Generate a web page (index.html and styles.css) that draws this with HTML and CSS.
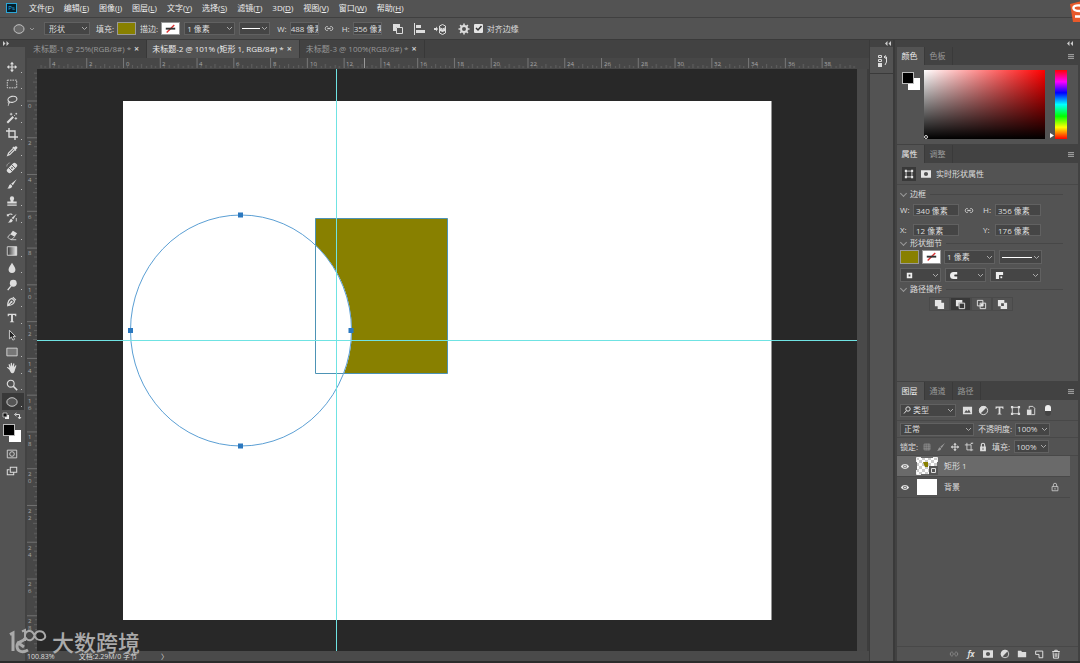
FILE: index.html
```html
<!DOCTYPE html>
<html lang="zh-CN">
<head>
<meta charset="utf-8">
<title>未标题-2</title>
<link rel="stylesheet" href="styles.css">
</head>
<body>
<svg class="defs" aria-hidden="true">
  <defs>
    <symbol id="shape-add" viewBox="0 0 12 12"><path fill="currentColor" d="M1 1h7v3h3v7H4V8H1z"/></symbol>
    <symbol id="shape-sub" viewBox="0 0 12 12"><path fill="currentColor" d="M1 1h7v3H4v4H1z"/><path fill="none" stroke="currentColor" d="M4.500 4.500h6v6h-6z"/></symbol>
    <symbol id="shape-int" viewBox="0 0 12 12"><path fill="none" stroke="currentColor" d="M1.500 1.500h6v6h-6zM4.500 4.500h6v6h-6z"/><path fill="currentColor" d="M5 5h3v3H5z"/></symbol>
    <symbol id="shape-xor" viewBox="0 0 12 12"><path fill="currentColor" fill-rule="evenodd" d="M1 1h7v3h3v7H4V8H1zM4.500 4.500v3h3v-3z"/></symbol>
    <symbol id="link" viewBox="0 0 12 8"><path fill="none" stroke="currentColor" stroke-width="1.200" d="M5 2.500C4 1 1.500 1.500 1.500 4S4 7 5 5.500M7 2.500C8 1 10.500 1.500 10.500 4S8 7 7 5.500M4 4h4"/></symbol>
    <symbol id="eye" viewBox="0 0 12 8"><path fill="currentColor" fill-rule="evenodd" d="M1 4C3.500 0 8.500 0 11 4 8.500 8 3.500 8 1 4zM6 1.800A2.200 2.200 0 1 0 6 6.200 2.200 2.200 0 1 0 6 1.800z"/><circle cx="6" cy="4" r="1.200" fill="currentColor"/></symbol>
    <symbol id="bounds" viewBox="0 0 12 12"><path fill="none" stroke="currentColor" d="M2.500 2.500h7v7h-7z"/><path fill="currentColor" d="M1 1h2.500v2.500H1zM8.500 1H11v2.500H8.500zM1 8.500h2.500V11H1zM8.500 8.500H11V11H8.500z"/></symbol>
    <symbol id="move" viewBox="0 0 14 14"><path fill="currentColor" d="M7 1l2.300 2.700H7.700v2.600h2.600V4.700L13 7l-2.700 2.300V7.700H7.700v2.600h1.600L7 13l-2.300-2.700h1.600V7.700H3.700v1.600L1 7l2.700-2.300v1.600h2.600V3.700H4.700z"/></symbol>
    <symbol id="brush" viewBox="0 0 14 14"><path fill="currentColor" d="M12.500 1.500L8 8.500 6 6.800zM5.300 7.400l2 1.800C7 12 4 12.500 1.500 12.200 3.500 11.500 3 8 5.300 7.400z"/></symbol>
    <symbol id="half" viewBox="0 0 12 12"><circle cx="6" cy="6" r="4.500" fill="none" stroke="currentColor"/><path fill="currentColor" d="M2.500 9.500A4.900 4.900 0 0 1 9.500 2.500z"/></symbol>
    <symbol id="mask" viewBox="0 0 12 12"><path fill="currentColor" fill-rule="evenodd" d="M0 1.500h12v9H0zM6 3.500A2.500 2.500 0 1 0 6 8.500 2.500 2.500 0 1 0 6 3.500z"/></symbol>
    <symbol id="lock" viewBox="0 0 12 12"><path fill="none" stroke="currentColor" stroke-width="1.300" d="M4 6V3.500a2 2 0 0 1 4 0V6"/><path fill="currentColor" fill-rule="evenodd" d="M2.500 5.500h7V11h-7zM5.500 7v2.500h1V7z"/></symbol>
    <symbol id="type" viewBox="0 0 14 14"><path fill="currentColor" d="M2 2h10v3h-1c-.2-1-.6-1.400-2.900-1.400v6.900c0 .5.400.7 1.400.8v.7h-5v-.7c1-.1 1.400-.3 1.400-.8V3.600C3.600 3.600 3.200 4 3 5H2z"/></symbol>
  </defs>
</svg>

<nav class="menubar">
  <span class="ps">Ps</span>
  <button>文件(<u>F</u>)</button><button>编辑(<u>E</u>)</button><button>图像(<u>I</u>)</button><button>图层(<u>L</u>)</button><button>文字(<u>Y</u>)</button><button>选择(<u>S</u>)</button><button>滤镜(<u>T</u>)</button><button>3D(<u>D</u>)</button><button>视图(<u>V</u>)</button><button>窗口(<u>W</u>)</button><button>帮助(<u>H</u>)</button>
</nav>

<header class="options">
  <button class="preset" aria-label="椭圆工具"><svg width="24" height="12" viewBox="0 0 24 12"><ellipse cx="6" cy="6" rx="5" ry="4.300" fill="#686868" stroke="#c4c4c4"/><path d="M17 5l2 2 2-2" fill="none" stroke="#999"/></svg></button>
  <select class="field mode" aria-label="工具模式"><option>形状</option></select>
  <span class="lab">填充:</span><button class="swatch olive" aria-label="填充"></button>
  <span class="lab">描边:</span><button class="swatch none" aria-label="描边"><svg viewBox="0 0 18 12"><path d="M5 10L13 2" stroke="#d33" stroke-width="1.500"/><path d="M4 6h10" stroke="#333" stroke-width="2"/></svg></button>
  <select class="field stroke-w" aria-label="描边宽度"><option>1 像素</option></select>
  <button class="field line-style" aria-label="描边类型"><i></i></button>
  <label class="lab wlab" for="ow">W:</label><input class="field size" id="ow" value="488 像素">
  <svg class="lnk" width="10" height="7"><use href="#link"/></svg>
  <label class="lab" for="oh">H:</label><input class="field size" id="oh" value="356 像素">
  <span class="optset">
    <button aria-label="路径操作"><svg><use href="#shape-sub"/></svg></button>
    <button aria-label="路径对齐方式"><svg viewBox="0 0 12 12"><path fill="currentColor" d="M1 0h1v12H1zM3 2h5v3H3zM3 7h9v3H3z"/></svg></button>
    <button aria-label="路径排列方式"><svg viewBox="0 0 12 12"><path fill="currentColor" d="M0 5h2V3.500L4 6 2 8.500V7H0z"/><path fill="none" stroke="currentColor" d="M5.500 3l3-1.500 3 1.500v7l-3 1.500-3-1.500zM5 4.500l3.500 1.500L12 4.500"/><path fill="currentColor" d="M6 5.500l2.500 1 2.500-1V8L8.500 9 6 8z"/></svg></button>
  </span>
  <button class="gear" aria-label="设置"><svg width="12" height="12" viewBox="0 0 12 12"><circle cx="6" cy="6" r="3" fill="none" stroke="#ddd" stroke-width="2"/><path stroke="#ddd" stroke-width="1.600" d="M6 .5v2M6 9.500v2M.5 6h2M9.500 6h2M2.100 2.100l1.400 1.400M8.500 8.500l1.400 1.400M2.100 9.900l1.400-1.400M8.500 3.500l1.400-1.400"/></svg></button>
  <label class="check"><input type="checkbox" checked>对齐边缘</label>
</header>

<main>
  <aside class="tools">
    <div class="grip"><svg width="8" height="5" viewBox="0 0 8 5"><path fill="#ccc" d="M1 0l2.500 2.500L1 5zM4.500 0L7 2.500 4.500 5z"/></svg></div>
    <div class="tool-list">
      <button aria-label="移动"><svg><use href="#move"/></svg></button>
      <button aria-label="选框"><svg viewBox="0 0 14 14"><path d="M1.500 2.500h11v9h-11z" fill="none" stroke="currentColor" stroke-dasharray="2 1"/></svg></button>
      <button aria-label="套索"><svg viewBox="0 0 14 14"><ellipse cx="7.500" cy="5" rx="5.300" ry="3.500" fill="none" stroke="currentColor" stroke-width="1.300" transform="rotate(-12 7.500 5)"/><path d="M3.500 7c-2 1-1 3 .5 2.300S4 8 3.300 9.500s0 2.500-1 3.200" fill="none" stroke="currentColor"/></svg></button>
      <button aria-label="魔棒"><svg viewBox="0 0 14 14"><path d="M1.500 12.500l7-7" stroke="currentColor" stroke-width="2.400"/><path d="M9.500 4.500l1-1M6 1v3M4.500 2.500h3M12 1v2M11 2h2M11.500 6v3M10 7.500h3" stroke="currentColor"/></svg></button>
      <button aria-label="裁剪"><svg viewBox="0 0 14 14"><path d="M3.500 0v10.500H14M0 3.500h10.500V14" fill="none" stroke="currentColor" stroke-width="1.600"/></svg></button>
      <button aria-label="吸管"><svg viewBox="0 0 14 14"><path fill="currentColor" d="M7.500 3l1.200-1.200.8.700C11 .5 13.800 1.300 13.200 3.500c-.2.700-1 1-1.700 1.500l.7.700L11 7z"/><path d="M8.500 4L3 9.500l-1 2.700 2.500-1L10 5.500" fill="none" stroke="currentColor" stroke-width="1.400"/></svg></button>
      <button aria-label="修复画笔"><svg viewBox="0 0 14 14"><g transform="rotate(-45 7 7)"><rect x="0" y="4" width="14" height="6" rx="2.500" fill="currentColor"/><path d="M4.500 4v6M9.500 4v6" stroke="#535353"/><circle cx="7" cy="7" r="1" fill="#535353"/></g><path d="M1 5a4 4 0 0 1 4-4" fill="none" stroke="currentColor" stroke-dasharray="1 1"/></svg></button>
      <button aria-label="画笔"><svg><use href="#brush"/></svg></button>
      <button aria-label="仿制图章"><svg viewBox="0 0 14 14"><path fill="currentColor" d="M4.500 4a2.500 2.500 0 1 1 5 0c0 1-1 2-.9 3.500H12.500V10h-11V7.500h3.900C5.500 6 4.500 5 4.500 4zM1.500 11h11v1.500h-11z"/></svg></button>
      <button aria-label="历史记录画笔"><svg viewBox="0 0 14 14"><path fill="currentColor" d="M12.500 2L8.500 8.500l-2-1.500zM6 8l2 1.500c-1 3-3.500 3-6 2.800C4.500 11.500 4 9 6 8zM1 2l1 1c2-2 5-1.500 6 0l-1 .5C6 2.500 4 2.500 3 4l1 1H1z"/><path d="M12 7v4" stroke="currentColor"/></svg></button>
      <button aria-label="橡皮擦"><svg viewBox="0 0 14 14"><path fill="currentColor" d="M8 2l5 3-3 4-5-3z"/><path d="M5 6L2 9.500 4.500 12H7l3-3M6 12.500h6" fill="none" stroke="currentColor"/></svg></button>
      <button aria-label="渐变"><svg viewBox="0 0 14 14"><defs><linearGradient id="tg"><stop stop-color="#333"/><stop offset="1" stop-color="#eee"/></linearGradient></defs><path d="M1.500 2h11v10h-11z" fill="url(#tg)" stroke="currentColor"/></svg></button>
      <button aria-label="模糊"><svg viewBox="0 0 14 14"><path fill="currentColor" d="M7 1c1 2.500 4 5 4 7.700a4 4 0 0 1-8 0C3 6 6 3.500 7 1z"/></svg></button>
      <button aria-label="减淡"><svg viewBox="0 0 14 14"><circle cx="8.500" cy="5" r="4" fill="currentColor"/><path d="M6 8l-4 5" stroke="currentColor" stroke-width="1.600"/></svg></button>
      <button aria-label="钢笔"><svg viewBox="0 0 14 14"><path d="M2 12.500C2 8 3 5 7 4l3 3c-.5 4-3.500 5-8 5.500zM2 12.500L6 8.500M8 2.500L11.500 6" fill="none" stroke="currentColor" stroke-width="1.400"/><circle cx="6.500" cy="8" r="1.200" fill="currentColor"/></svg></button>
      <button aria-label="文字"><svg><use href="#type"/></svg></button>
      <button aria-label="路径选择"><svg viewBox="0 0 14 14"><path d="M4 1.500v10l2.300-2.200L8 13l2-1-1.700-3.300H11z" fill="#222" stroke="currentColor" stroke-width="1"/></svg></button>
      <button aria-label="矩形"><svg viewBox="0 0 14 14"><path d="M1 2.500h12v9H1z" fill="#777" stroke="currentColor"/></svg></button>
      <button aria-label="抓手"><svg viewBox="0 0 14 14"><path fill="currentColor" d="M4 9L1 6.500c0-1 1-1 3 .5L3 3c.3-.8 1-.8 1.400 0l1 2.500L5.500 1.500c.3-.8 1.200-.8 1.400 0l.3 3.800L8.500 2c.5-.7 1.300-.5 1.300.3L9.200 6 11 4c.7-.4 1.300.1 1 .8L10.500 9c-.5 2-1 4-3 4S5 11 4 9z"/></svg></button>
      <button aria-label="缩放"><svg viewBox="0 0 14 14"><circle cx="5.500" cy="5.500" r="4" fill="none" stroke="currentColor" stroke-width="1.300"/><path d="M8.500 8.500l4.500 4.500" stroke="currentColor" stroke-width="1.800"/></svg></button>
      <button class="on" aria-label="椭圆"><svg viewBox="0 0 14 14"><ellipse cx="7" cy="7" rx="6" ry="5" fill="#555" stroke="currentColor"/></svg></button>
    </div>
    <svg class="mini" width="20" height="8" viewBox="0 0 20 8"><path fill="#eee" d="M3 3h4v4H3z"/><path fill="#111" stroke="#ccc" stroke-width=".8" d="M1 1h4v4H1z"/><path d="M13.500 2.500h4v4M14.500 1l-2 1.500 2 1.500M16 5l1.500 2L19 5" fill="none" stroke="#ddd"/></svg>
    <div class="colors"><b></b><i></i></div>
    <div class="tool-end">
      <button aria-label="快速蒙版"><svg viewBox="0 0 14 14"><path d="M1.500 2.500h11v9h-11z" fill="none" stroke="currentColor"/><circle cx="7" cy="7" r="2.700" fill="none" stroke="currentColor"/></svg></button>
      <button aria-label="屏幕模式"><svg viewBox="0 0 14 14"><path d="M5 2.500h7.500v6H5zM4 5.500H1.500v6H9V9" fill="none" stroke="currentColor" stroke-width="1.200"/></svg></button>
    </div>
  </aside>

  <section class="doc">
    <div class="tabs">
      <button>未标题-1 @ 25%(RGB/8#) *<b>×</b></button><button class="active">未标题-2 @ 101% (矩形 1, RGB/8#) *<b>×</b></button><button>未标题-3 @ 100%(RGB/8#) *<b>×</b></button>
    </div>
    <div class="work">
      <svg class="hruler"><defs>
        <pattern id="hp" width="36.770" height="10" x="96" patternUnits="userSpaceOnUse"><path d="M.5 0v10" stroke="#777"/><path d="M4.500 8v2M9.500 7v3M14.500 8v2M18.500 6v4M23.500 8v2M28.500 7v3M32.500 8v2" stroke="#606060"/></pattern></defs>
        <rect x="10" width="820" height="10" fill="url(#hp)"/>
        <g><text x="25" y="8">4</text><text x="62" y="8">2</text><text x="99" y="8">0</text><text x="135" y="8">2</text><text x="172" y="8">4</text><text x="209" y="8">6</text><text x="246" y="8">8</text><text x="283" y="8">10</text><text x="319" y="8">12</text><text x="356" y="8">14</text><text x="393" y="8">16</text><text x="430" y="8">18</text><text x="466" y="8">20</text><text x="503" y="8">22</text><text x="540" y="8">24</text><text x="577" y="8">26</text><text x="614" y="8">28</text><text x="650" y="8">30</text><text x="687" y="8">32</text><text x="724" y="8">34</text><text x="761" y="8">36</text><text x="797" y="8">38</text></g>
        <path d="M337.500 0v10" stroke="#999"/>
      </svg>
      <svg class="vruler"><defs>
        <pattern id="vp" width="10" height="36.770" y="31.500" patternUnits="userSpaceOnUse"><path d="M0 .5h10" stroke="#707070"/><path d="M8 4.500h2M7 9.500h3M8 14.500h2M6 18.500h4M8 23.500h2M7 28.500h3M8 32.500h2" stroke="#606060"/></pattern></defs>
        <rect width="10" height="582" fill="url(#vp)"/>
        <g><text x="1" y="39">0</text><text x="1" y="76">2</text><text x="1" y="113">4</text><text x="1" y="150">6</text><text x="1" y="186">8</text><text x="1" y="223">1</text><text x="1" y="230">0</text><text x="1" y="260">1</text><text x="1" y="267">2</text><text x="1" y="297">1</text><text x="1" y="304">4</text><text x="1" y="334">1</text><text x="1" y="341">6</text><text x="1" y="370">1</text><text x="1" y="377">8</text><text x="1" y="407">2</text><text x="1" y="414">0</text><text x="1" y="444">2</text><text x="1" y="451">2</text><text x="1" y="481">2</text><text x="1" y="488">4</text><text x="1" y="517">2</text><text x="1" y="524">6</text><text x="1" y="554">2</text><text x="1" y="561">8</text></g>
      </svg>
      <svg class="canvas"><g transform="translate(-37 -69)">
        <path fill="#fff" d="M123 101h648.500v519H123z"/>
        <path fill="#888000" d="M315.500 218.500h132v155H344A110.500 115.500 0 0 0 315.500 245z"/>
        <path fill="none" stroke="#4d93b5" d="M315.500 218.500h132v155h-132z"/>
        <ellipse cx="241" cy="330.500" rx="110.500" ry="115.500" fill="none" stroke="#5b9fd4"/>
        <path fill="none" stroke="#6fe3e3" d="M336.500 69v2000"/><path fill="none" stroke="#6fe3e3" d="M37 340.500h3000"/>
        <path fill="#2b78bf" d="M238 212.500h5v5h-5zM238 443.500h5v5h-5zM128 328h5v5h-5zM348.500 328h5v5h-5z"/>
      </g></svg>
      <div class="vscroll"></div>
    </div>
    <footer class="status"><span>100.83%</span><span>文档:2.29M/0 字节</span><span>〉</span></footer>
  </section>

  <aside class="dock">
    <div class="grip"><svg width="8" height="5" viewBox="0 0 8 5"><path fill="#ccc" d="M3.500 0L1 2.500 3.500 5zM7 0L4.500 2.500 7 5z"/></svg></div>
    <button class="history" aria-label="历史记录"><svg width="12" height="14" viewBox="0 0 12 14"><path fill="#ddd" d="M1 9h4v4H1z"/><path d="M1.500 1.500h3v2h-3zM1.500 5.500h3v2h-3zM7 3h2.500v5L8 11M9 1.500L7 3l2 1.500" fill="none" stroke="#ddd"/></svg></button>
    <div class="dock-rest"></div>
  </aside>

  <aside class="panels">
    <div class="grip"><svg width="8" height="5" viewBox="0 0 8 5"><path fill="#ccc" d="M3.500 0L1 2.500 3.500 5zM7 0L4.500 2.500 7 5z"/></svg></div>
    <section class="panel color">
      <div class="ptabs"><button class="active">颜色</button><button>色板</button><i class="burger"></i></div>
      <div class="picker">
        <div class="colors"><b></b><i></i></div>
        <div class="field-sv"><i></i></div>
        <svg class="ptr" width="6" height="7" viewBox="0 0 6 7"><path fill="#fff" d="M1 1l4 2.500L1 6z"/></svg>
        <div class="hue"></div>
      </div>
    </section>

    <section class="panel props">
      <div class="ptabs"><button class="active">属性</button><button>调整</button><i class="burger"></i></div>
      <div class="phead"><span class="ic on"><svg><use href="#bounds"/></svg></span><span class="ic"><svg><use href="#mask"/></svg></span>实时形状属性</div>
      <div class="pbody">
        <h3>边框</h3>
        <div class="xy"><label for="pw">W:</label><input class="field" id="pw" value="340 像素"><svg class="lnk" width="10" height="7"><use href="#link"/></svg><label for="ph">H:</label><input class="field" id="ph" value="356 像素"></div>
        <div class="xy second"><label for="px">X:</label><input class="field" id="px" value="12 像素"><span></span><label for="py">Y:</label><input class="field" id="py" value="176 像素"></div>
        <h3>形状细节</h3>
        <div class="row"><button class="swatch olive" aria-label="填充"></button><button class="swatch none" aria-label="描边"><svg viewBox="0 0 18 12"><path d="M5 10L13 2" stroke="#d33" stroke-width="1.500"/><path d="M4 6h10" stroke="#333" stroke-width="2"/></svg></button><select class="field stroke-w" aria-label="描边宽度"><option>1 像素</option></select><button class="field line-style" aria-label="描边类型"><i></i></button></div>
        <div class="row drops">
          <button class="field" aria-label="对齐"><svg viewBox="0 0 10 10"><path d="M3 3h4v4H3z" fill="none" stroke="#eee" stroke-width="2"/></svg></button>
          <button class="field" aria-label="端点"><svg viewBox="0 0 10 10"><path fill="#eee" d="M8 1v3H5v2h3v3H4a4 4 0 0 1 0-8z"/><path d="M5 5h4" stroke="#333"/></svg></button>
          <button class="field" aria-label="角点"><svg viewBox="0 0 10 10"><path fill="#eee" d="M1 1h8v3.500H4.500V9H1z"/><path fill="#eee" d="M6 6h2v2H6z"/></svg></button>
        </div>
        <h3>路径操作</h3>
        <div class="pathops"><button aria-label="合并"><svg><use href="#shape-add"/></svg></button><button class="on" aria-label="减去"><svg><use href="#shape-sub"/></svg></button><button aria-label="相交"><svg><use href="#shape-int"/></svg></button><button aria-label="排除"><svg><use href="#shape-xor"/></svg></button></div>
      </div>
    </section>

    <section class="panel layers">
      <div class="ptabs"><button class="active">图层</button><button>通道</button><button>路径</button><i class="burger"></i></div>
      <div class="lrow filter">
        <div class="kind-wrap"><svg width="8" height="8" viewBox="0 0 8 8"><circle cx="5" cy="3" r="2.200" fill="none" stroke="#ddd"/><path d="M3.500 4.500L1 7.500" stroke="#ddd"/></svg><select class="field kind" aria-label="类型"><option>类型</option></select></div>
        <svg viewBox="0 0 12 12"><path fill="currentColor" fill-rule="evenodd" d="M1 2h10v8H1zM2.500 8.500h7L7.500 5 6 7 4.500 5.500z"/></svg>
        <svg><use href="#half"/></svg><svg><use href="#type"/></svg><svg><use href="#bounds"/></svg>
        <svg viewBox="0 0 12 12"><path d="M3.500 4V1.500h4l2 2v7H6" fill="none" stroke="currentColor"/><path fill="currentColor" d="M1 5h5v6H1z"/></svg>
        <i class="toggle"></i>
      </div>
      <div class="lrow"><select class="field blend" aria-label="混合模式"><option>正常</option></select><label for="op">不透明度:</label><select class="field pct" id="op"><option>100%</option></select></div>
      <div class="lrow locks"><span>锁定:</span>
        <svg viewBox="0 0 12 12"><path d="M2.500 2.500h7v7h-7zM5 2v8M7.500 2v8M2 5h8M2 7.500h8" fill="none" stroke="#999" stroke-width=".8"/></svg><svg class="dim"><use href="#brush"/></svg><svg><use href="#move"/></svg><svg viewBox="0 0 12 12"><path d="M1 3.500h7.500V11M3.500 1v8.500H11M8 3l2-2M8 1.500h3" fill="none" stroke="currentColor"/></svg><svg><use href="#lock"/></svg>
        <label for="fl">填充:</label><select class="field pct" id="fl"><option>100%</option></select></div>
      <div class="list">
        <div class="layer sel"><svg class="eye"><use href="#eye"/></svg>
          <svg class="thumb" viewBox="0 0 22 18"><defs><pattern id="ck" width="6" height="6" patternUnits="userSpaceOnUse"><path fill="#fff" d="M0 0h6v6H0z"/><path fill="#ccc" d="M0 0h3v3H0zM3 3h3v3H3z"/></pattern></defs><path fill="url(#ck)" d="M1 1h20v16H1z"/><path fill="#888000" d="M7 5h5v5H9z"/><path fill="#555" d="M13 9h9v9h-9z"/><path d="M15.500 11.500h4v4h-4z" fill="none" stroke="#ddd"/><path d="M.5 5V.5H5M17 .5h4.500V5M.5 13v4.500H5" fill="none" stroke="#eee"/></svg><span>矩形 1</span></div>
        <div class="layer"><svg class="eye"><use href="#eye"/></svg><i class="thumb bg"></i><span>背景</span>
          <svg class="lk" viewBox="0 0 12 12"><path d="M4 5.500V3.500a2 2 0 0 1 4 0v2M2.500 5.500h7v5h-7zM6 7v2" fill="none" stroke="currentColor"/></svg></div>
      </div>
      <div class="lfoot">
        <svg class="dim" viewBox="0 0 12 8"><use href="#link"/></svg>
        <button class="fx">fx</button><svg><use href="#mask"/></svg><svg><use href="#half"/></svg>
        <svg viewBox="0 0 12 12"><path fill="currentColor" d="M1 2h4l1 1.500h5V10H1z"/></svg>
        <svg viewBox="0 0 12 12"><path d="M2 2.500h8.500v8H6V6.500H2z" fill="none" stroke="currentColor" stroke-width="1.200"/></svg>
        <svg viewBox="0 0 12 12"><path d="M1.500 3h9M4.500 2.500v-1h3v1M2.500 4l.5 7h6l.5-7M5 5v4.500M7 5v4.500" fill="none" stroke="currentColor" stroke-width="1.200"/></svg>
      </div>
    </section>
  </aside>
</main>

<svg class="ime" width="12" height="24" viewBox="0 0 12 24"><path fill="#e8592a" d="M2 4l12-3v21H5z"/><path d="M12 5.500C7 5 5 6.500 5.500 8.500S9 11 12 11M7 16.500h5" fill="none" stroke="#fff" stroke-width="2.400"/></svg>
<div class="brand"><svg width="40" height="28" viewBox="0 0 40 28"><path d="M2 7.500L5 6v18M17 11c-1 4-8 3-8 8 0 6 6 7 11 4M9 15l7 5" fill="none" stroke="currentColor" stroke-width="3"/><path d="M14 4.500l3-1.500v11M17 10c3 5 8 4 9.500-1.500S35 3 37 8s-7.500 8-10.500.5S17 4 17 9" fill="none" stroke="currentColor" stroke-width="2"/></svg><span>大数跨境</span></div>
</body>
</html>
```
FILE: styles.css
```css
* { box-sizing: border-box; }
body {
  margin: 0; height: 100vh; display: flex; flex-direction: column; overflow: hidden;
  background: #535353; color: #dedede;
  font: 8px/10px "Open Sans", "Noto Sans CJK SC", sans-serif;
}
button, input, select { font: inherit; color: inherit; margin: 0; padding: 0; border: 0; background: none; border-radius: 0; appearance: none; min-width: 0; }
button { display: block; }
svg { display: block; flex: none; }
.defs { position: absolute; width: 0; height: 0; }

.menubar { display: flex; align-items: center; height: 18px; gap: 10px; padding: 0 6px 2px; border-bottom: 1px solid #404040; }
.menubar button { white-space: nowrap; color: #eee; }
.ps { width: 11px; height: 10px; margin-right: 2px; border: 1px solid #2ba6d8; background: #04202d; color: #2fb4ea; font-size: 6px; line-height: 8px; text-align: center; }

.options { display: flex; align-items: center; height: 22px; padding-left: 13px; border-bottom: 1px solid #3a3a3a; }
.field { height: 13px; background-color: #454545; border: 1px solid #616161; padding-left: 4px; text-align: left; }
select.field, .line-style, .drops .field {
  background-image: url("data:image/svg+xml,%3Csvg xmlns='http://www.w3.org/2000/svg' width='7' height='5'%3E%3Cpath d='M1 1l2.500 2.500L6 1' fill='none' stroke='%23aaa'/%3E%3C/svg%3E");
  background-repeat: no-repeat; background-position: right 1px center;
}
.preset { width: 31px; }
.mode { width: 46px; margin-right: 6px; }
.lab { margin-right: 3px; }
.swatch { width: 19px; height: 13px; margin-right: 4px; border: 1px solid #999; }
.olive { background: #888000; }
.none { background: #fff; }
.stroke-w { width: 51px; padding-left: 2px; margin-right: 4px; }
.line-style { width: 31px; padding: 0 9px 0 2px; }
.line-style i { display: block; height: 1px; background: #fff; }
.wlab { margin-left: 7px; }
.size { width: 29px; padding-left: 0; }
.lnk { margin: 0 8px 0 5px; color: #ccc; }
.optset { display: flex; gap: 9px; margin-left: 10px; }
.optset svg { width: 12px; height: 12px; color: #ddd; }
.gear { margin: 0 4px 0 12px; }
.check { display: flex; align-items: center; gap: 4px; }
.check input { width: 9px; height: 9px; background: #e4e4e4 url("data:image/svg+xml,%3Csvg xmlns='http://www.w3.org/2000/svg' width='9' height='9'%3E%3Cpath d='M2 4l2 2 3.500-4' fill='none' stroke='%23333' stroke-width='1.500'/%3E%3C/svg%3E"); border-radius: 1px; }

main { flex: 1; min-height: 0; display: flex; background: #424242; border-bottom: 2px solid #2b2b2b; }
.grip { height: 7px; flex: none; display: flex; align-items: center; padding-left: 2px; background: #424242; }
.tools { width: 25px; flex: none; display: flex; flex-direction: column; background: #535353; }
.tool-list { display: flex; flex-direction: column; height: 351px; margin-top: 12px; }
.tool-list button, .tool-end button { flex: 1; width: 22px; margin-left: 2px; display: flex; align-items: center; padding-left: 4px; color: #ddd; position: relative; }
.tool-list button::after { content: ""; position: absolute; right: 2px; bottom: 3px; width: 1px; height: 1px; background: #bbb; }
.tool-list svg, .tool-end svg { width: 12px; height: 12px; }
.tool-list .on { background: #383838; }
.mini { margin: 2px 0 4px 2px; }
.colors { position: relative; width: 18px; height: 18px; }
.colors b, .colors i { position: absolute; width: 12px; height: 12px; }
.colors b { left: 0; top: 0; background: #000; border: 1px solid #bbb; z-index: 1; }
.colors i { right: 0; bottom: 0; background: #fff; }
.tools .colors { margin-left: 3px; }
.tool-end { display: flex; flex-direction: column; height: 34px; margin-top: 3px; }

.doc { flex: 1; min-width: 0; display: flex; flex-direction: column; padding-left: 2px; }
.tabs { height: 18px; display: flex; color: #999; }
.tabs button { padding: 0 7px 0 6px; border-right: 1px solid #383838; white-space: pre; }
.tabs .active { background: #535353; color: #eee; padding: 0 7px 0 5px; }
.tabs b { font-size: 9px; margin-left: 3px; color: #ccc; }
.work { flex: 1; min-height: 0; display: grid; grid-template: 11px minmax(0, 1fr) / 10px minmax(0, 1fr) 12px; }
.hruler { grid-column: 1 / 4; width: 100%; height: 11px; background: #474747; }
.vruler { width: 10px; height: 100%; background: #474747; }
.hruler text, .vruler text { font-size: 6px; fill: #aaa; }
.canvas { width: 100%; height: 100%; background: #282828; }
.vscroll { background: #494949; border-right: 2px solid #3d3d3d; }
.status { height: 10px; display: flex; gap: 24px; color: #ddd; background: #4a4a4a; font-size: 7px; line-height: 12px; }

.dock { width: 25px; flex: none; display: flex; flex-direction: column; border: solid #3a3a3a; border-width: 0 1px; }
.dock .grip { padding-left: 14px; }
.history { height: 27px; background: #535353; padding: 2px 0 0 7px; border-bottom: 1px solid #3a3a3a; }
.dock-rest { flex: 1; background: #535353; }

.panels { width: 186px; flex: none; display: flex; flex-direction: column; padding: 0 2px; border-left: 1px solid #3a3a3a; }
.panels .grip { justify-content: flex-end; padding-right: 4px; }
.panel { background: #535353; margin-bottom: 1px; }
.ptabs { display: flex; height: 18px; background: #424242; color: #999; }
.ptabs button { width: 28px; padding-right: 2px; text-align: center; border-right: 1px solid #3a3a3a; }
.ptabs .active { background: #535353; color: #eee; }
.burger { width: 6px; height: 5px; margin: 7px 4px 0 auto; background: repeating-linear-gradient(#999 0 1px, #555 1px 2px); }
.color { height: 97px; }
.picker { display: flex; padding: 5px 11px 0 5px; }
.field-sv { flex: 1; height: 69px; margin-left: 4px; display: flex; align-items: flex-end; overflow: hidden; background: linear-gradient(transparent, #000), linear-gradient(90deg, #fff, #f00); }
.field-sv i { width: 4px; height: 4px; border: 1px solid #ddd; border-radius: 50%; }
.ptr { align-self: flex-end; margin-left: 4px; }
.hue { width: 12px; height: 69px; background: linear-gradient(#f00, #f0f 17%, #00f 33%, #0ff 50%, #0f0 67%, #ff0 83%, #f00); }
.picker .colors { margin-top: 2px; }

.props { height: 236px; }
.phead { display: flex; align-items: center; height: 22px; padding-left: 5px; border-bottom: 1px solid #484848; }
.ic { width: 14px; height: 14px; margin-right: 3px; display: grid; place-items: center; color: #e6e6e6; }
.ic svg { width: 10px; height: 10px; }
.ic.on { background: #383838; }
.pbody { padding: 4px 8px 0 3px; margin-right: 7px; }
h3 { display: flex; align-items: center; gap: 4px; margin: 0; height: 10px; font: inherit; }
h3::before { content: ""; width: 4px; height: 4px; margin: 0 0 2px 1px; border: solid #999; border-width: 0 1px 1px 0; transform: rotate(45deg); }
h3::after { content: ""; flex: 1; height: 1px; background: #474747; }
.xy { display: grid; grid-template-columns: 13px 46px 24px 12px 46px; align-items: center; height: 12px; margin: 5px 0 8px; }
.xy .field { width: 46px; height: 12px; padding-left: 2px; }
.xy.second { margin-bottom: 2px; }
.row { display: flex; margin-top: 2px; }
.row .swatch { height: 14px; margin-right: 3px; }
.row .field { height: 14px; }
.row .line-style { width: 43px; }
.drops { gap: 4px; margin: 4px 0 2px; }
.drops .field { width: 41px; }
.drops .field:last-child { width: 51px; }
.drops svg { width: 9px; height: 9px; }
.pathops { display: flex; margin: 3px 0 0 29px; }
.pathops button { width: 21px; height: 14px; display: grid; place-items: center; border: 1px solid #4a4a4a; }
.pathops .on { background: #383838; }
.pathops svg { width: 11px; height: 11px; color: #e6e6e6; }

.layers { flex: 1; margin: 0; display: flex; flex-direction: column; }
.lrow { display: flex; align-items: center; height: 17px; padding-left: 3px; border-bottom: 1px solid #484848; gap: 5px; }
.lrow svg { width: 11px; height: 11px; color: #ddd; }
.lrow.filter { height: 21px; }
.kind-wrap { position: relative; margin-right: 1px; }
.kind-wrap svg { position: absolute; left: 3px; top: 2px; width: 8px; height: 8px; }
.kind { width: 56px; padding-left: 12px; display: block; }
.toggle { width: 6px; height: 11px; margin-left: 3px; border-radius: 3px; background: linear-gradient(#eee 0 6px, #444 6px); }
.blend { width: 74px; padding-left: 3px; }
.pct { width: 35px; padding-left: 1px; }
.blend + label { margin-left: -1px; }
.lrow label + .pct { margin-left: -2px; }
.lrow.locks { height: 18px; gap: 4px; }
.locks svg { width: 10px; height: 10px; }
.lrow.locks svg.dim { color: #999; }
.lrow.locks .pct { margin-left: 0; }
.list { flex: 1; padding-right: 8px; }
.layer { display: flex; align-items: center; height: 21px; padding-left: 3px; border-bottom: 1px solid #484848; }
.sel { background: #6a6a6a; }
.eye { width: 10px; height: 7px; margin-right: 6px; color: #e6e6e6; }
.thumb { width: 22px; height: 18px; margin-right: 6px; }
.bg { width: 20px; height: 16px; margin: 0 7px 0 1px; background: #fff; }
.lk { width: 10px; height: 10px; margin: 0 10px 0 auto; color: #ccc; }
.lfoot { display: flex; align-items: center; justify-content: flex-end; gap: 7px; height: 15px; padding-right: 17px; border-top: 1px solid #484848; color: #ddd; }
.lfoot svg { width: 10px; height: 10px; }
.lfoot .dim { color: #888; }
.fx { font-style: italic; font-weight: bold; width: 10px; }

.ime { position: absolute; right: 0; top: 0; }
.brand { position: absolute; left: 8px; bottom: 8px; display: flex; align-items: center; gap: 4px; color: #aaa; font: 500 22px/22px "Noto Sans CJK SC", sans-serif; }
```
